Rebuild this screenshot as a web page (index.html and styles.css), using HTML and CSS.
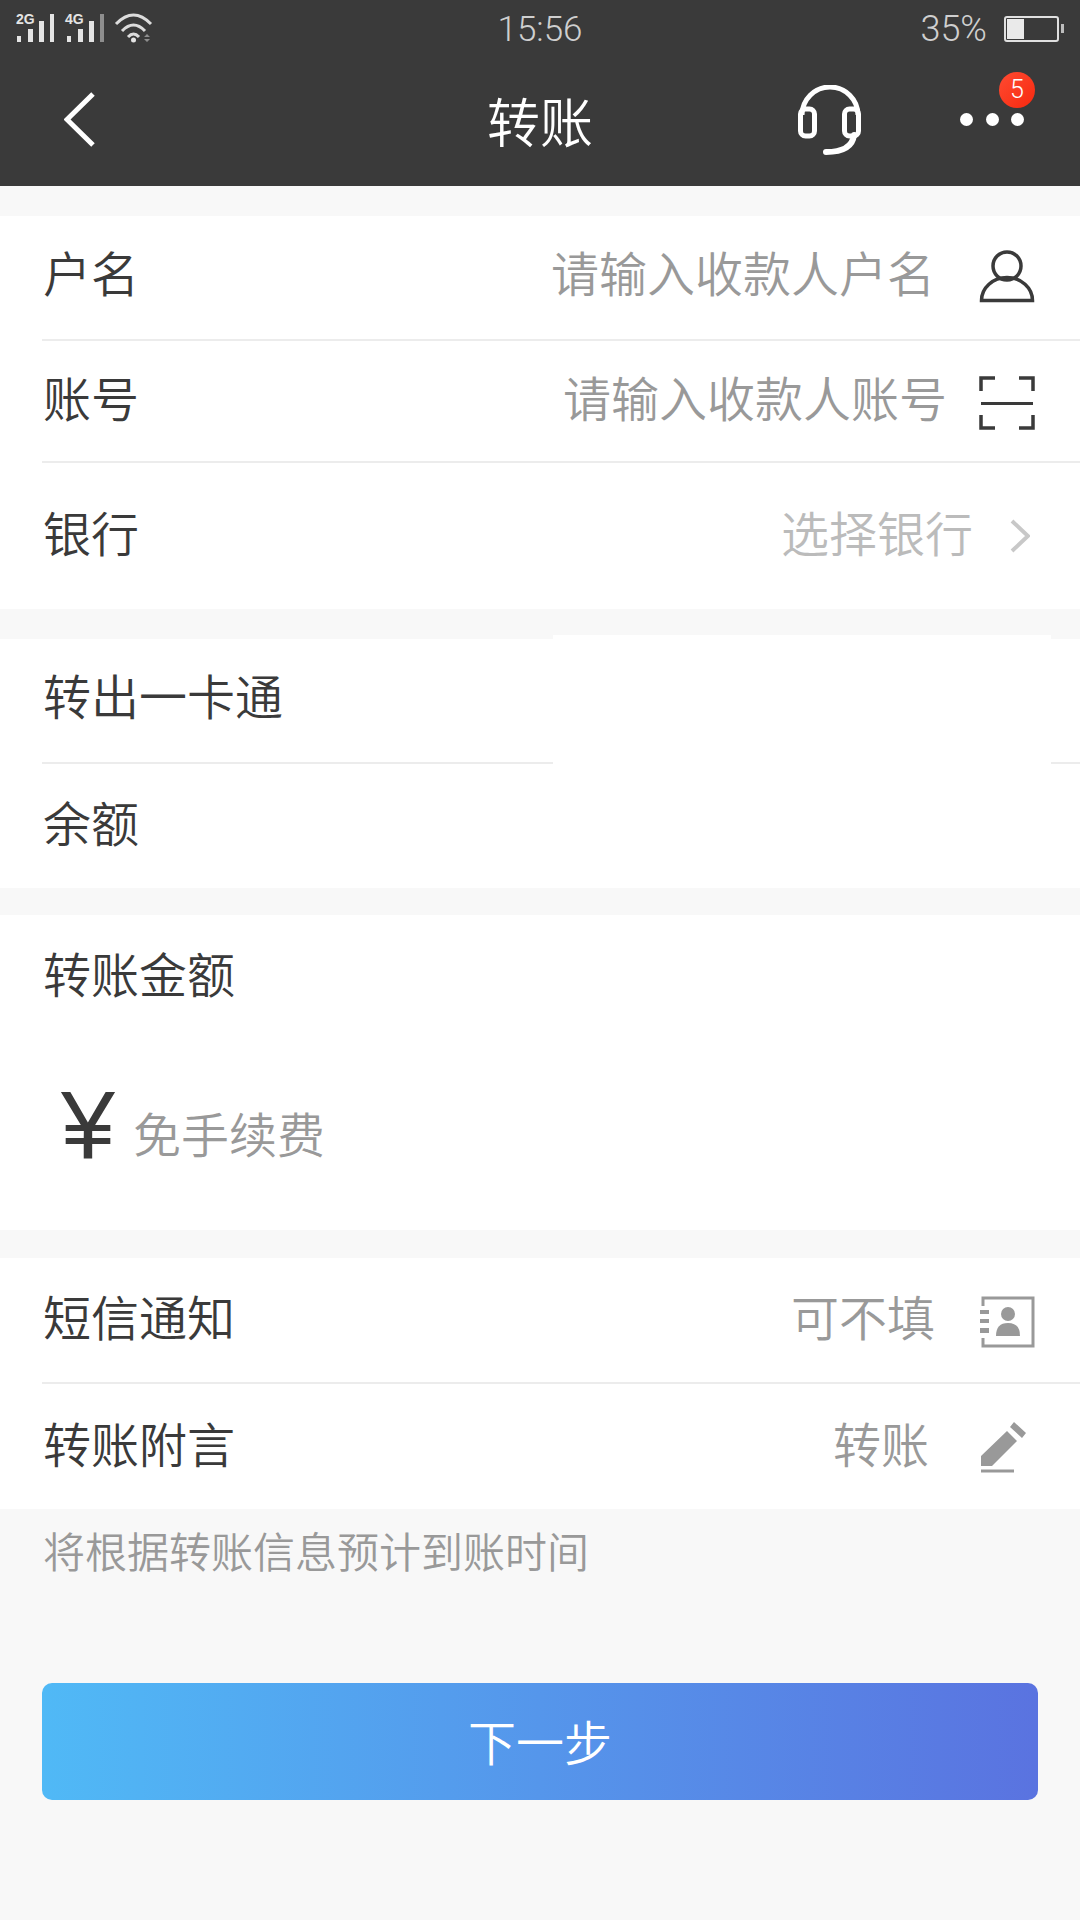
FILE: index.html
```html
<!DOCTYPE html>
<html lang="zh-CN">
<head>
    <meta charset="UTF-8">
    <meta name="viewport" content="width=device-width, initial-scale=1.0">
    <title>转账</title>
    <link rel="stylesheet" href="styles.css">
</head>
<body>
    <header class="topbar">
        <div class="status">
            <div class="signals">
                <svg class="signal-icon" width="160" height="44" viewBox="0 0 160 44">
                    <text x="16" y="24" class="net">2G</text>
                    <rect x="17" y="36" width="4" height="6"/><rect x="28" y="29" width="5" height="13"/>
                    <rect x="39" y="21" width="5" height="21"/><rect x="50" y="14" width="4" height="28"/>
                    <text x="65" y="24" class="net">4G</text>
                    <rect x="67" y="36" width="4" height="6"/><rect x="78" y="29" width="5" height="13"/>
                    <rect x="89" y="21" width="5" height="21"/><rect x="100" y="14" width="4" height="28" class="dim"/>
                    <path d="M116 24 Q133.500 6 151 24 M122 31 Q133.500 19 145 31 M128 37 Q133.500 31 139 37" fill="none" stroke="#dcdcdc" stroke-width="3"/>
                    <circle cx="133.500" cy="40" r="2.500"/>
                    <path d="M144 37 L147 34 L150 37Z M144 39 H150 L147 42Z" class="dim"/>
                </svg>
            </div>
            <span class="time">15:56</span>
            <div class="power">
                <span class="percent">35%</span>
                <span class="battery"><span class="battery-fill"></span></span>
            </div>
        </div>
        <nav class="navbar">
            <svg class="back" width="31" height="56" viewBox="0 0 31 56">
                <path d="M29 2 L3 27.500 L29 53" fill="none" stroke="#fff" stroke-width="5"/>
            </svg>
            <h1 class="nav-title">转账</h1>
            <svg class="headset" width="66" height="72" viewBox="0 0 66 72">
                <path d="M5 30 A28 28 0 0 1 61 30" fill="none" stroke="#fff" stroke-width="5"/>
                <rect x="3.500" y="24" width="14" height="27" rx="5" fill="none" stroke="#fff" stroke-width="5"/>
                <rect x="47.500" y="24" width="14" height="27" rx="5" fill="none" stroke="#fff" stroke-width="5"/>
                <path d="M57 50 Q55 67 29 67" fill="none" stroke="#fff" stroke-width="6" stroke-linecap="round"/>
            </svg>
            <div class="more">
                <i class="dot"></i><i class="dot"></i><i class="dot"></i>
                <span class="badge">5</span>
            </div>
        </nav>
    </header>

    <section class="group">
        <div class="row row-a">
            <span class="label">户名</span>
            <span class="value gap-l">请输入收款人户名</span>
            <svg class="person" width="56" height="54" viewBox="0 0 56 54">
                <circle cx="28" cy="17" r="14" fill="none" stroke="#3a3a3a" stroke-width="3.500"/>
                <path d="M2.500 51.500 A25.500 23 0 0 1 53.500 51.500 Z" fill="none" stroke="#3a3a3a" stroke-width="3.500"/>
            </svg>
        </div>
        <div class="row row-b">
            <span class="label">账号</span>
            <span class="value gap-m">请输入收款人账号</span>
            <svg class="scan" width="56" height="54" viewBox="0 0 56 54">
                <path d="M2 15 V2 H16 M40 2 H54 V15 M2 39 V52 H16 M40 52 H54 V39" fill="none" stroke="#3a3a3a" stroke-width="3.500"/>
                <path d="M2 27.500 H54" stroke="#3a3a3a" stroke-width="3"/>
            </svg>
        </div>
        <div class="row row-c no-line">
            <span class="label">银行</span>
            <span class="value light">选择银行</span>
            <svg class="chevron" width="20" height="34" viewBox="0 0 20 34">
                <path d="M2 2 L18 17 L2 32" fill="none" stroke="#c8c8c8" stroke-width="4"/>
            </svg>
        </div>
    </section>

    <section class="group group-card">
        <div class="row row-d"><span class="label">转出一卡通</span></div>
        <div class="row row-e no-line"><span class="label">余额</span></div>
        <div class="card-mask"></div>
    </section>

    <section class="group amount">
        <div class="amount-title">转账金额</div>
        <div class="amount-input">
            <span class="yen">¥</span>
            <span class="fee">免手续费</span>
        </div>
    </section>

    <section class="group group-last">
        <div class="row row-f">
            <span class="label">短信通知</span>
            <span class="value gap-l">可不填</span>
            <svg class="contacts" width="56" height="52" viewBox="0 0 56 52">
                <path d="M4 10 V2 H54 V50 H4 V42" fill="none" stroke="#999" stroke-width="3"/>
                <path d="M1 14 H10 V18 H1Z M1 23 H10 V27 H1Z M1 32 H10 V37 H1Z" fill="#999"/>
                <circle cx="29" cy="18" r="7" fill="#999"/>
                <path d="M17 40 Q17 27 29 27 Q41 27 41 40Z" fill="#999"/>
            </svg>
        </div>
        <div class="row row-g no-line">
            <span class="label">转账附言</span>
            <span class="value gap-xl">转账</span>
            <svg width="56" height="52" viewBox="0 0 56 52">
                <path d="M2 35 L28 10 L38 20 L13 45 H2Z M35 1 L47 12 L43 17 L31 6Z" fill="#999"/>
                <path d="M2 50 H35" stroke="#999" stroke-width="3"/>
            </svg>
        </div>
    </section>

    <p class="hint">将根据转账信息预计到账时间</p>
    <button class="next">下一步</button>
</body>
</html>
```

FILE: styles.css
```css
* { box-sizing: border-box; }
html, body { margin: 0; padding: 0; }
body { width: 1080px; height: 1920px; overflow: hidden; background: #f8f8f8; color: #3a3a3a; font-family: "Noto Sans CJK SC", "Noto Sans", sans-serif; font-size: 48px; font-weight: 350; }

.topbar { height: 186px; background: #3a3a3a; }
.status { height: 60px; display: flex; justify-content: space-between; align-items: flex-start; }
.signals { width: 300px; height: 44px; }
.signal-icon { display: block; fill: #e4e4e4; }
.signal-icon .dim { fill: #8e8e8e; }
.net { font-family: "Liberation Sans", sans-serif; font-size: 14px; font-weight: 700; fill: #e4e4e4; }
.time { font-family: Roboto, sans-serif; font-size: 35px; font-weight: 300; line-height: 60px; color: #cfcfcf; }
.power { width: 300px; height: 58px; display: flex; justify-content: flex-end; align-items: center; padding-right: 21px; }
.percent { font-family: Roboto, sans-serif; font-size: 36px; font-weight: 300; color: #cfcfcf; margin-right: 17px; }
.battery { width: 55px; height: 26px; border: 2px solid #e0e0e0; border-radius: 3px; padding: 1px; position: relative; display: block; }
.battery::after { content: ""; position: absolute; right: -7px; top: 6px; width: 3px; height: 9px; background: #bdbdbd; }
.battery-fill { display: block; width: 17px; height: 100%; background: #eaeaea; }

.navbar { height: 126px; display: flex; align-items: center; position: relative; color: #fff; }
.back { margin-left: 64px; margin-top: -6px; }
.nav-title { position: absolute; left: 0; right: 0; top: 0; margin: 0; text-align: center; font-size: 53px; font-weight: 350; line-height: 120px; pointer-events: none; }
.headset { margin-left: auto; margin-top: -4px; }
.more { width: 64px; margin: 0 56px 0 97px; display: flex; justify-content: space-between; position: relative; top: -4px; }
.dot { width: 13px; height: 13px; border-radius: 50%; background: #fff; display: block; }
.badge { position: absolute; right: -11px; top: -41px; width: 36px; height: 36px; border-radius: 50%; background: linear-gradient(135deg, #ff4b32, #f7290f); color: #fff; font-family: Roboto, sans-serif; font-size: 25px; line-height: 36px; text-align: center; }

.group { background: #fff; margin-top: 30px; }
.group-card { position: relative; }
.group-last { margin-top: 28px; }
.row { margin-left: 42px; padding: 0 45px 0 1px; display: flex; align-items: center; border-bottom: 2px solid #ececec; }
.row.no-line { border-bottom: 0; }
.row svg { display: block; flex: none; }
.row .scan { margin-top: 4px; }
.row .person { margin-bottom: 3px; }
.row .contacts { margin-top: 3px; }
.row-a { height: 125px; }
.row-b { height: 122px; }
.row-c { height: 146px; }
.row-d { height: 125px; }
.row-e { height: 124px; }
.row-f { height: 126px; }
.row-g { height: 125px; }
.label { flex: none; margin-bottom: 10px; }
.value { margin-left: auto; margin-bottom: 10px; color: #999; }
.value.light { color: #bbb; }
.row-a .label, .row-a .value, .row-d .label { margin-bottom: 14px; }
.gap-l { margin-right: 44px; }
.gap-m { margin-right: 32px; }
.gap-xl { margin-right: 50px; }
.chevron { margin: 0 5px 0 37px; }
.card-mask { position: absolute; left: 553px; top: -4px; width: 498px; height: 129px; background: #fff; }

.amount { height: 315px; margin-top: 27px; padding: 21px 0 0 43px; }
.amount-title { line-height: 72px; }
.amount-input { display: flex; align-items: center; margin-top: 68px; }
.yen { font-family: "Liberation Sans", sans-serif; font-size: 97px; font-weight: 400; line-height: 97px; width: 90px; padding-left: 18px; }
.fee { color: #999; margin-top: 14px; }

.hint { margin: 0; padding: 11px 0 0 43px; font-size: 42px; line-height: 60px; color: #999; }
.next { display: block; width: 996px; height: 117px; margin: 103px 0 0 42px; padding: 0 0 4px; border: 0; border-radius: 10px; background: linear-gradient(90deg, #50b9f6, #5a73e0); color: #fff; font-family: inherit; font-size: 48px; font-weight: 350; }
```
